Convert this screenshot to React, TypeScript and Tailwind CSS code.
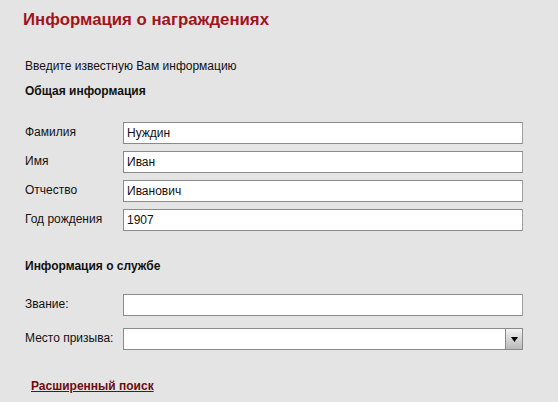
import React from "react";

const font = { fontFamily: '"Liberation Sans", Arial, sans-serif' };

function Field({ label, value }: { label: string; value?: string }) {
  return (
    <div className="flex items-center h-[22px]">
      <div className="w-[98px] text-[12px] leading-[14px] text-[#111] -mt-[2px]">{label}</div>
      <div className="w-[400px] h-[22px] bg-white border border-[#8a8a8a] border-r-[#a0a0a0] flex items-center pl-[3px] text-[12px] text-[#111]">
        {value}
      </div>
    </div>
  );
}

export default function App() {
  return (
    <div className="w-[558px] h-[402px] bg-[#e4e4e4] overflow-hidden" style={font}>
      <div className="pl-[23px] pt-[10px] flex flex-col">
        <h1 className="text-[16.8px] leading-[20px] font-bold text-[#a0141c]">Информация о награждениях</h1>
        <div className="pl-[2px] mt-[29px] text-[12px] leading-[14px] text-[#111]">Введите известную Вам информацию</div>
        <div className="pl-[2px] mt-[11px] text-[12px] leading-[14px] font-bold text-[#111]">Общая информация</div>
        <div className="pl-[2px] mt-[24px] flex flex-col gap-[7px]">
          <Field label="Фамилия" value="Нуждин" />
          <Field label="Имя" value="Иван" />
          <Field label="Отчество" value="Иванович" />
          <Field label="Год рождения" value="1907" />
        </div>
        <div className="pl-[2px] mt-[28px] text-[12px] leading-[14px] font-bold text-[#111]">Информация о службе</div>
        <div className="pl-[2px] mt-[21px] flex flex-col gap-[12px]">
          <Field label="Звание:" />
          <div className="flex items-center h-[22px]">
            <div className="w-[98px] text-[12px] leading-[14px] text-[#111] -mt-[2px]">Место призыва:</div>
            <div className="w-[400px] h-[22px] bg-white border border-[#8a8a8a] flex">
              <div className="flex-1" />
              <div className="w-[17px] h-full border-l border-[#8a8a8a] bg-gradient-to-b from-[#f2f2f2] to-[#b9b9b9] flex items-center justify-center">
                <svg width="7" height="5" viewBox="0 0 7 5">
                  <path d="M0 0 H7 L3.5 5 Z" fill="#000" />
                </svg>
              </div>
            </div>
          </div>
        </div>
        <div className="pl-[8px] mt-[23px]">
          <a href="#" className="text-[12px] leading-[14px] font-bold text-[#6b0c10] underline">Расширенный поиск</a>
        </div>
      </div>
    </div>
  );
}
